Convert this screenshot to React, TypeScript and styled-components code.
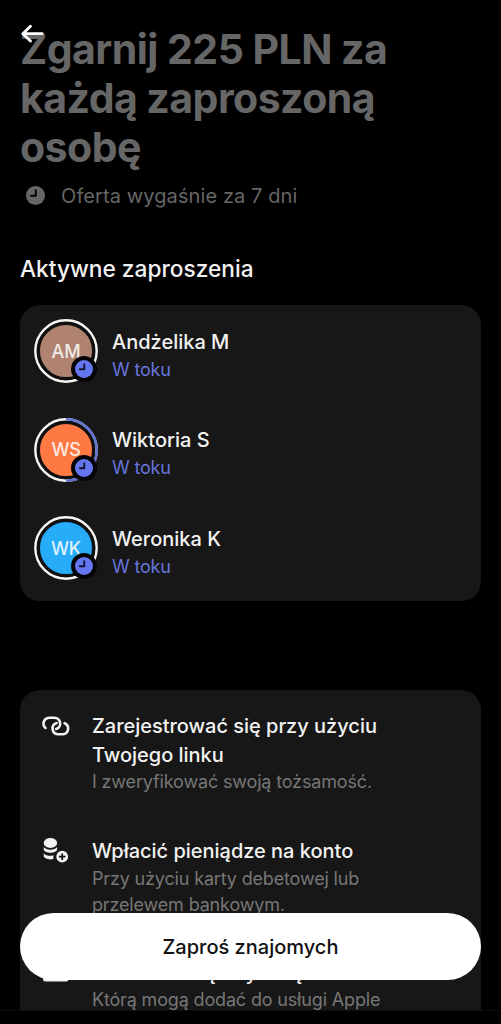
import React from "react";
import styled, { createGlobalStyle } from "styled-components";

const GlobalStyle = createGlobalStyle`
  * { box-sizing: border-box; }
  body { margin: 0; background: #000; }
`;

const Screen = styled.main`
  position: relative;
  width: 501px;
  height: 1024px;
  overflow: hidden;
  padding: 25px 20px 0;
  background: #000;
  color: #f2f2f2;
  font-family: Inter, sans-serif;
`;

const BackButton = styled.button`
  position: absolute;
  left: 20px;
  top: 22px;
  width: 26px;
  height: 24px;
  padding: 0;
  border: 0;
  background: none;
  svg { display: block; }
`;

const Title = styled.h1`
  margin: 0;
  color: #666;
  font-size: 41px;
  font-weight: 700;
  line-height: 49px;
  letter-spacing: -0.54px;
  white-space: nowrap;
`;

const Expiry = styled.div`
  display: flex;
  align-items: center;
  gap: 16px;
  height: 31px;
  margin-top: 8px;
  padding-left: 6px;
  color: #666;
  font-size: 20px;
  letter-spacing: 0.1px;
  white-space: nowrap;
`;

const SectionTitle = styled.h2`
  margin: 43px 0 0;
  font-size: 22.7px;
  font-weight: 500;
  line-height: 30px;
  white-space: nowrap;
`;

const Card = styled.section`
  border-radius: 20px;
  background: #171717;
`;

const InviteCard = styled(Card)`
  display: flex;
  flex-direction: column;
  gap: 34.5px;
  height: 296px;
  margin-top: 21px;
  padding: 14px;
`;

const InviteRow = styled.div`
  display: flex;
  align-items: center;
  gap: 14px;
  height: 64px;
`;

const InviteText = styled.div`
  padding-top: 8px;
  white-space: nowrap;
`;

const Name = styled.div`
  font-size: 20px;
  font-weight: 500;
  line-height: 28px;
`;

const Status = styled.div`
  color: #6675dc;
  font-size: 18px;
  line-height: 27px;
  letter-spacing: -0.18px;
`;

const AvatarBox = styled.div`
  position: relative;
  width: 64px;
  height: 64px;
  display: grid;
  place-items: center;
`;

const Ring = styled.svg`
  position: absolute;
  inset: 0;
`;

const Initials = styled.span`
  position: relative;
  color: rgba(255, 255, 255, 0.85);
  font-size: 18px;
  font-weight: 500;
  letter-spacing: -0.2px;
`;

const Badge = styled.div`
  position: absolute;
  left: 37px;
  top: 37px;
  width: 26px;
  height: 26px;
  display: grid;
  place-items: center;
  border-radius: 50%;
  background: #050508;
  color: #6477f0;
`;

const StepsCard = styled(Card)`
  height: 400px;
  margin-top: 89px;
  padding: 22px 20px 0;
`;

const Step = styled.div`
  display: flex;
  align-items: flex-start;
  gap: 20px;
  margin-bottom: 42px;

  &:last-child {
    margin-top: -43px;
    padding-top: 42px;
  }
`;

const StepIcon = styled.div<{ $top: number }>`
  width: 32px;
  flex: none;
  padding-top: ${(p) => p.$top}px;
  svg { display: block; }
`;

const StepTitle = styled.div`
  font-size: 20px;
  font-weight: 500;
  line-height: 28.5px;
  letter-spacing: -0.02px;
  white-space: nowrap;
`;

const StepNote = styled.div`
  color: #767676;
  font-size: 18px;
  line-height: 26px;
  letter-spacing: -0.16px;
  white-space: nowrap;
`;

const InviteButton = styled.button`
  position: absolute;
  left: 20px;
  top: 913px;
  width: 461px;
  height: 67px;
  padding: 0;
  border: 0;
  border-radius: 34px;
  background: #fff;
  color: #111;
  font: 500 20px Inter, sans-serif;
`;

const BottomBar = styled.div`
  position: absolute;
  left: 0;
  right: 0;
  bottom: 0;
  height: 14px;
  border-top: 1px solid #0c0c0c;
  background: #000;
`;

const ClockIcon = ({ size, hand }: { size: number; hand: string }) => (
  <svg width={size} height={size} viewBox="0 0 20 20" fill="none">
    <circle cx="10" cy="10" r="10" fill="currentColor" />
    <path d="M10.3 4.6v5.6H5.4" stroke={hand} strokeWidth="2.1" strokeLinecap="round" strokeLinejoin="round" />
  </svg>
);

const LinkIcon = () => (
  <svg width="32" height="24" viewBox="0 0 32 24" fill="none" stroke="#f2f2f2" strokeWidth="2.6" strokeLinecap="round">
    <path d="M5.500 11.900A5.800 5.800 0 0 1 8.800 1.700h5.600A5.800 5.800 0 0 1 16.200 13" />
    <path d="M24.600 7.200a5.800 5.800 0 0 1-1.700 11.100h-5.100A5.800 5.800 0 0 1 16.600 7" />
  </svg>
);

const CoinsIcon = () => (
  <svg width="32" height="28" viewBox="0 0 32 28" fill="#f2f2f2">
    <ellipse cx="10.400" cy="6" rx="6.700" ry="5" />
    <path d="M3.700 10.100c2.700 3.500 10.700 3.500 13.400 0v1.800c0 5-13.400 5-13.400 0z" />
    <path d="M3.700 16.200c2.200 2.600 6.600 3.200 10.100 2.100-.5 1.200-.6 2.300-.4 3.800-4.500 1-9.700-.3-9.700-3.500z" />
    <circle cx="22.200" cy="19.700" r="5.900" />
    <path d="M22.200 16.400v6.600M18.900 19.700h6.600" stroke="#171717" strokeWidth="1.800" />
  </svg>
);

const CardIcon = () => (
  <svg width="32" height="24" viewBox="0 0 32 24" fill="#f2f2f2">
    <rect x="3" y="1" width="25.500" height="18.500" rx="2.500" />
  </svg>
);

type AvatarProps = { initials: string; color: string; half?: boolean };

const Avatar = ({ initials, color, half }: AvatarProps) => (
  <AvatarBox>
    <Ring width="64" height="64" viewBox="0 0 64 64" fill="none">
      <circle cx="32" cy="32" r="30.700" stroke="#f7f5f2" strokeWidth="2.400" />
      {half && <path d="M32 1.300a30.700 30.700 0 0 1 0 61.400" stroke="#6274d2" strokeWidth="2.600" />}
      <circle cx="32" cy="32" r="27.500" fill={color} stroke="#101010" strokeWidth="3" />
    </Ring>
    <Initials>{initials}</Initials>
    <Badge>
      <ClockIcon size={18} hand="#11152e" />
    </Badge>
  </AvatarBox>
);

const invites = [
  { name: "Andżelika M", initials: "AM", color: "#b08370" },
  { name: "Wiktoria S", initials: "WS", color: "#ff7943", half: true },
  { name: "Weronika K", initials: "WK", color: "#27acfa" },
];

const steps = [
  {
    icon: <LinkIcon />,
    top: 4,
    title: ["Zarejestrować się przy użyciu", "Twojego linku"],
    note: ["I zweryfikować swoją tożsamość."],
  },
  {
    icon: <CoinsIcon />,
    top: 0,
    title: ["Wpłacić pieniądze na konto"],
    note: ["Przy użyciu karty debetowej lub", "przelewem bankowym."],
  },
  {
    icon: <CardIcon />,
    top: 3,
    title: ["Zamów kartę fizyczną"],
    note: ["Którą mogą dodać do usługi Apple"],
  },
];

export default function App() {
  return (
    <>
      <GlobalStyle />
      <Screen>
        <Title>
          Zgarnij 225 PLN za
          <br />
          każdą zaproszoną
          <br />
          osobę
        </Title>
        <Expiry>
          <ClockIcon size={19} hand="#000" />
          Oferta wygaśnie za 7 dni
        </Expiry>
        <SectionTitle>Aktywne zaproszenia</SectionTitle>
        <InviteCard>
          {invites.map((i) => (
            <InviteRow key={i.name}>
              <Avatar initials={i.initials} color={i.color} half={i.half} />
              <InviteText>
                <Name>{i.name}</Name>
                <Status>W toku</Status>
              </InviteText>
            </InviteRow>
          ))}
        </InviteCard>
        <StepsCard>
          {steps.map((s) => (
            <Step key={s.title[0]}>
              <StepIcon $top={s.top}>{s.icon}</StepIcon>
              <div>
                {s.title.map((t) => (
                  <StepTitle key={t}>{t}</StepTitle>
                ))}
                {s.note.map((t) => (
                  <StepNote key={t}>{t}</StepNote>
                ))}
              </div>
            </Step>
          ))}
        </StepsCard>
        <BackButton aria-label="Wstecz">
          <svg width="26" height="24" viewBox="0 0 26 24" fill="none" stroke="#fff" strokeWidth="2.800" strokeLinecap="round" strokeLinejoin="round">
            <path d="M22.200 11.700H3M10.500 4.300L2.800 11.700l7.700 7.400" />
          </svg>
        </BackButton>
        <InviteButton>Zaproś znajomych</InviteButton>
        <BottomBar />
      </Screen>
    </>
  );
}
